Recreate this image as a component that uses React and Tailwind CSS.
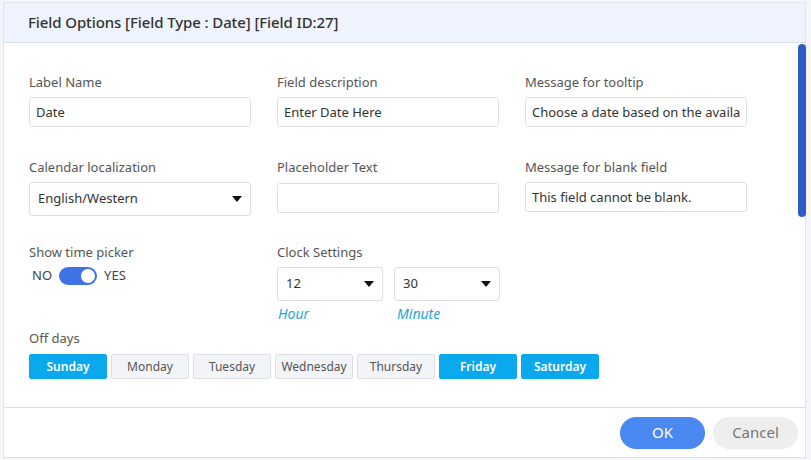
import { useState } from 'react';

const days = [
  { name: 'Sunday', on: true },
  { name: 'Monday', on: false },
  { name: 'Tuesday', on: false },
  { name: 'Wednesday', on: false },
  { name: 'Thursday', on: false },
  { name: 'Friday', on: true },
  { name: 'Saturday', on: true },
];

function Caret() {
  return (
    <svg width="10" height="6" viewBox="0 0 10 6" className="shrink-0">
      <path d="M0 0h10L5 6z" fill="#111" />
    </svg>
  );
}

function Field({ label, children }) {
  return (
    <div className="flex flex-col">
      <div className="text-[13px] leading-[18px] text-[#555]">{label}</div>
      <div className="mt-[6px]">{children}</div>
    </div>
  );
}

function TextBox({ value }) {
  return (
    <input
      readOnly
      value={value}
      className="h-[30px] w-[222px] border border-[#e0e0e0] rounded-[3px] px-[6px] text-[13px] text-[#333] outline-none bg-white"
    />
  );
}

function Select({ value, width = 'w-[222px]' }) {
  return (
    <div className={`h-[34px] ${width} border border-[#e0e0e0] rounded-[3px] pl-[8px] pr-[8px] flex items-center justify-between text-[13px] text-[#333]`}>
      <span>{value}</span>
      <Caret />
    </div>
  );
}

export default function App() {
  const [timePicker, setTimePicker] = useState(true);
  const [off, setOff] = useState(days);

  return (
    <div
      className="w-[811px] h-[460px] bg-[#f4f6f9] overflow-hidden pl-[3px] pt-[2px]"
      style={{ fontFamily: '"Noto Sans", "Open Sans", sans-serif' }}
    >
      <div className="relative w-[803px] h-[456px] bg-white border border-[#dfe4ec] flex flex-col">
        <div className="h-[40px] bg-[#eef3fd] border-b border-[#d8dee8] flex items-center pl-[24px] shrink-0">
          <span className="text-[15px] font-medium text-[#333] tracking-[-0.1px]">
            Field Options [Field Type : Date] [Field ID:27]
          </span>
        </div>

        <div className="flex-1 pl-[25px] pt-[30px]">
          <div className="grid grid-cols-[222px_222px_222px] gap-x-[26px] items-start">
            <Field label="Label Name">
              <TextBox value="Date" />
            </Field>
            <Field label="Field description">
              <TextBox value="Enter Date Here" />
            </Field>
            <Field label="Message for tooltip">
              <TextBox value="Choose a date based on the availability" />
            </Field>
          </div>

          <div className="grid grid-cols-[222px_222px_222px] gap-x-[26px] items-start mt-[31px]">
            <Field label="Calendar localization">
              <Select value="English/Western" />
            </Field>
            <Field label="Placeholder Text">
              <div className="pt-[1px]">
                <TextBox value="" />
              </div>
            </Field>
            <Field label="Message for blank field">
              <TextBox value="This field cannot be blank." />
            </Field>
          </div>

          <div className="grid grid-cols-[222px_222px_222px] gap-x-[26px] items-start mt-[27px]">
            <Field label="Show time picker">
              <div className="flex items-center gap-[7px] pl-[3px] h-[18px] text-[13px] text-[#444]">
                <span>NO</span>
                <button
                  onClick={() => setTimePicker(!timePicker)}
                  className={`w-[38px] h-[18px] rounded-full flex items-center px-[2px] ${timePicker ? 'bg-[#3f72e4] justify-end' : 'bg-[#ccc] justify-start'}`}
                >
                  <span className="w-[14px] h-[14px] rounded-full bg-white" />
                </button>
                <span>YES</span>
              </div>
            </Field>
            <Field label="Clock Settings">
              <div className="flex gap-[11px]">
                <div className="flex flex-col">
                  <Select value="12" width="w-[106px]" />
                  <span className="italic text-[14px] text-[#2aa5d8] mt-[2px] pl-[1px]">Hour</span>
                </div>
                <div className="flex flex-col">
                  <Select value="30" width="w-[106px]" />
                  <span className="italic text-[14px] text-[#2aa5d8] mt-[2px] pl-[3px]">Minute</span>
                </div>
              </div>
            </Field>
          </div>

          <div className="mt-[5px] text-[13px] leading-[18px] text-[#555]">Off days</div>
          <div className="flex gap-[4px] mt-[7px]">
            {off.map((d, i) => (
              <button
                key={d.name}
                onClick={() => setOff(off.map((x, j) => (j === i ? { ...x, on: !x.on } : x)))}
                className={`w-[78px] h-[25px] rounded-[2px] text-[12px] border ${d.on ? 'bg-[#0aa8ec] border-[#0aa8ec] text-white font-semibold' : 'bg-[#f3f4f7] border-[#dcdfe4] text-[#555]'}`}
              >
                {d.name}
              </button>
            ))}
          </div>
        </div>

        <div className="h-[50px] border-t border-[#d8dee8] flex items-center justify-end gap-[8px] pr-[7px] shrink-0">
          <button className="w-[85px] h-[32px] rounded-full bg-[#4b89f2] text-white text-[15px]">OK</button>
          <button className="w-[85px] h-[32px] rounded-full bg-[#eeeeee] text-[#777] text-[15px]">Cancel</button>
        </div>

        <div className="absolute right-[-1px] top-[41px] w-[8px] h-[173px] rounded-full bg-[#2d5cc4]" />
      </div>
    </div>
  );
}
